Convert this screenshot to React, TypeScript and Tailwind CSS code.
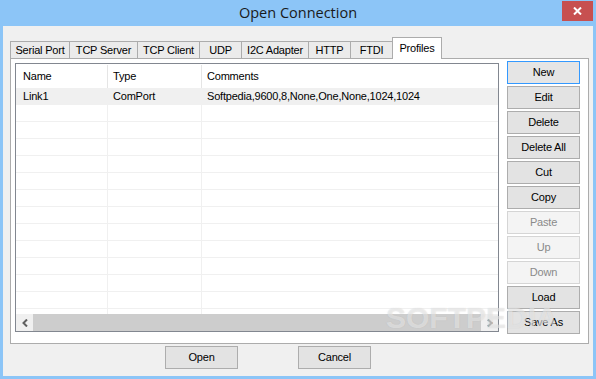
import React from "react";

const tabs = [
  { label: "Serial Port", w: "w-[60px]" },
  { label: "TCP Server", w: "w-[69px]" },
  { label: "TCP Client", w: "w-[63px]" },
  { label: "UDP", w: "w-[43px]" },
  { label: "I2C Adapter", w: "w-[68px]" },
  { label: "HTTP", w: "w-[43px]" },
  { label: "FTDI", w: "w-[43px]" },
];

const sideButtons = [
  { label: "New", state: "default" },
  { label: "Edit", state: "on" },
  { label: "Delete", state: "on" },
  { label: "Delete All", state: "on" },
  { label: "Cut", state: "on" },
  { label: "Copy", state: "on" },
  { label: "Paste", state: "off" },
  { label: "Up", state: "off" },
  { label: "Down", state: "off" },
  { label: "Load", state: "on" },
  { label: "Save As", state: "on" },
];

const Button = ({ label, state, className = "" }: { label: string; state: string; className?: string }) => {
  const look =
    state === "off"
      ? "border-[#d5d5d5] bg-[#f4f4f4] text-[#8a8a8a]"
      : state === "default"
      ? "border-[#3399ff] bg-[#e5e5e5] text-black"
      : "border-[#adadad] bg-[#e3e3e3] text-black";
  return (
    <div className={`h-[23px] w-[73px] border flex items-center justify-center ${look} ${className}`}>
      {label}
    </div>
  );
};

const Chevron = ({ dir }: { dir: "left" | "right" }) => (
  <svg width="6" height="8" viewBox="0 0 6 8">
    <path
      d={dir === "left" ? "M5 0.5 L1.5 4 L5 7.5" : "M1 0.5 L4.5 4 L1 7.5"}
      fill="none"
      stroke="#606060"
      strokeWidth="2"
    />
  </svg>
);

export default function App() {
  const rows = Array.from({ length: 14 });
  return (
    <div className="relative w-[596px] h-[379px] bg-[#8cc5f7] flex flex-col font-['Liberation_Sans',Arial,sans-serif] text-[11px] tracking-[-0.2px] text-black overflow-hidden">
      {/* title bar */}
      <div className="h-[26px] flex items-start px-[3px]">
        <div className="w-[31px]" />
        <div className="flex-1 h-[26px] flex items-center justify-center font-['Open_Sans',sans-serif] text-[14.5px] tracking-normal text-[#1a1a1a]">
          Open Connection
        </div>
        <div className="w-[31px] h-[20px] mt-[1px] bg-[#c75050] flex items-center justify-center">
          <svg width="9" height="8" viewBox="0 0 9 8">
            <path d="M1 0.5 L8 7.5 M8 0.5 L1 7.5" stroke="white" strokeWidth="2" />
          </svg>
        </div>
      </div>

      {/* client */}
      <div className="flex-1 mx-[3px] mb-[3px] bg-[#f0f0f0] flex flex-col pl-[7px] pr-[4px] pt-[11px]">
        {/* tabs */}
        <div className="h-[21px] flex items-end relative z-10">
          {tabs.map((t, i) => (
            <div
              key={t.label}
              className={`${t.w} h-[17px] ${i > 0 ? "-ml-px" : ""} border border-b-0 border-[#acacac] bg-[#ebebeb] flex items-center justify-center`}
            >
              {t.label}
            </div>
          ))}
          <div className="w-[50px] h-[22px] -ml-px -mb-px border border-b-0 border-[#acacac] bg-white flex items-center justify-center pb-[1px]">
            Profiles
          </div>
        </div>

        {/* tab page */}
        <div className="h-[286px] border border-[#acacac] bg-white flex pl-[4px] pt-[2px]">
          {/* list view */}
          <div className="mt-[2px] w-[484px] h-[269px] border border-[#828790] flex flex-col">
            <div className="h-[24px] flex items-center pt-[1px]">
              <div className="w-[92px] h-full border-r border-[#e5e5e5] pl-[7px] flex items-center">Name</div>
              <div className="w-[94px] h-full border-r border-[#e5e5e5] pl-[5px] flex items-center">Type</div>
              <div className="flex-1 pl-[5px] flex items-center">Comments</div>
            </div>
            <div className="h-[226px] overflow-hidden">
              {rows.map((_, i) => (
                <div
                  key={i}
                  className={`h-[17px] flex border-b border-[#f0f0f0] ${i === 0 ? "bg-[#f0f0f0]" : ""}`}
                >
                  <div className="w-[92px] border-r border-[#f0f0f0] pl-[7px] flex items-center">
                    {i === 0 ? "Link1" : ""}
                  </div>
                  <div className="w-[94px] border-r border-[#f0f0f0] pl-[5px] flex items-center">
                    {i === 0 ? "ComPort" : ""}
                  </div>
                  <div className="flex-1 pl-[5px] flex items-center">
                    {i === 0 ? "Softpedia,9600,8,None,One,None,1024,1024" : ""}
                  </div>
                </div>
              ))}
            </div>
            <div className="h-[17px] flex bg-[#f0f0f0]">
              <div className="w-[17px] flex items-center justify-center">
                <Chevron dir="left" />
              </div>
              <div className="flex-1 bg-[#cdcdcd]" />
              <div className="w-[17px] flex items-center justify-center">
                <Chevron dir="right" />
              </div>
            </div>
          </div>

          {/* side buttons */}
          <div className="ml-[8px] flex flex-col gap-[2px]">
            {sideButtons.map((b) => (
              <Button key={b.label} label={b.label} state={b.state} />
            ))}
          </div>
        </div>

        {/* bottom buttons */}
        <div className="mt-[2px] flex pl-[155px]">
          <Button label="Open" state="on" />
          <Button label="Cancel" state="on" className="ml-[60px]" />
        </div>
      </div>

      {/* watermark */}
      <div className="absolute left-[386px] top-[302px] font-['Liberation_Sans',sans-serif] font-bold text-[30px] leading-[32px] tracking-normal text-white/45 [text-shadow:0_0_1px_rgba(160,160,160,0.4)] pointer-events-none">
        SOFTPEDIA
      </div>
    </div>
  );
}
